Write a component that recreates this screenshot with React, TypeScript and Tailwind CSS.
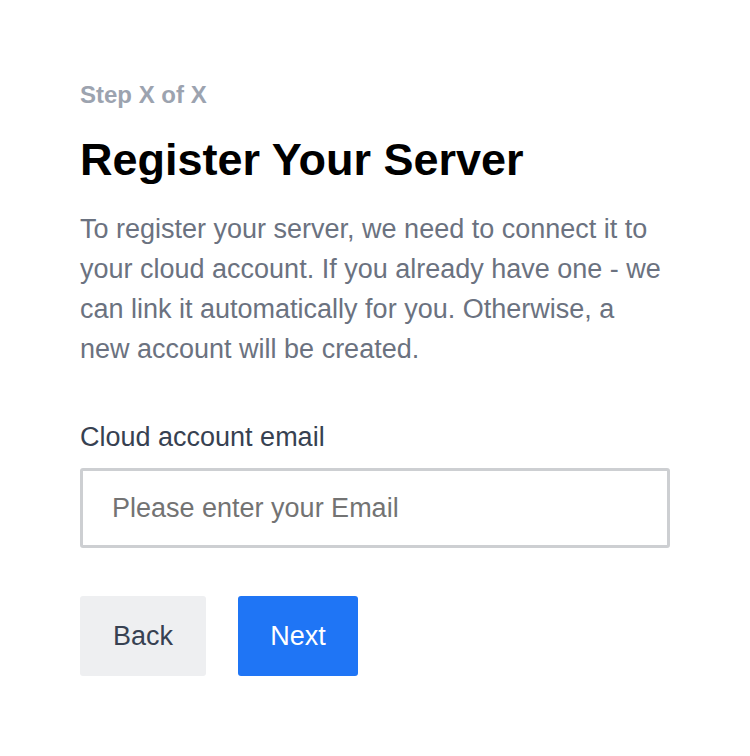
export default function App() {
  return (
    <div className="min-h-screen bg-white px-[80px] pt-[79px] font-['Liberation_Sans',Arial,sans-serif]">
      <div className="w-[590px]">
        <p className="text-[24px] leading-[32px] font-bold text-[#9ca3af]">Step X of X</p>
        <h1 className="mt-[22px] text-[45px] leading-[54px] font-bold text-black">Register Your Server</h1>
        <p className="mt-[22px] text-[27px] leading-[40px] text-[#6b7280]">
          To register your server, we need to connect it to your cloud account. If you already have one - we
          can link it automatically for you. Otherwise, a new account will be created.
        </p>
        <label className="mt-[50px] block text-[27px] leading-[36px] text-[#374151]">Cloud account email</label>
        <input
          type="email"
          placeholder="Please enter your Email"
          className="mt-[13px] block h-[80px] w-full rounded-[3px] border-[3px] border-[#cdcfd2] px-[29px] text-[27px] text-[#374151] placeholder:text-[#737373] outline-none"
        />
        <div className="mt-[48px] flex gap-[32px]">
          <button className="h-[80px] w-[126px] rounded-[3px] bg-[#eeeff1] text-[27px] text-[#374151]">Back</button>
          <button className="h-[80px] w-[120px] rounded-[3px] bg-[#1f75f5] text-[27px] text-white">Next</button>
        </div>
      </div>
    </div>
  );
}
